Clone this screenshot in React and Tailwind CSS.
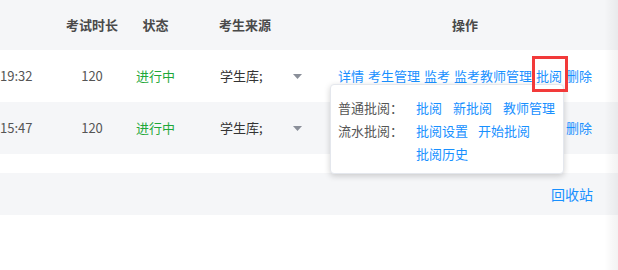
import React from 'react'

const font = { fontFamily: '"Noto Sans CJK SC", "Noto Sans", sans-serif' }

const rows = [
  { time: '19:32', bg: 'bg-white' },
  { time: '15:47', bg: 'bg-[#f5f6f8]' },
]

const ops = ['详情', '考生管理', '监考', '监考教师管理', '批阅', '删除']

function Caret() {
  return (
    <svg width="9" height="5" viewBox="0 0 9 5" className="shrink-0">
      <path d="M0 0h9L4.5 5z" fill="#8a8f99" />
    </svg>
  )
}

function Row({ time, bg, hidden }) {
  return (
    <div className={`grid grid-cols-[62px_60px_67px_121px_1fr] h-[52px] items-center text-[13px] ${bg}`}>
      <div className="text-[#555] whitespace-nowrap overflow-hidden">{time}</div>
      <div className="text-center text-[#555]">120</div>
      <div className="text-center text-[#1fa83a]">进行中</div>
      <div className="flex items-center pl-[31px] pr-[8px] text-[#333]">
        <span className="flex-1">学生库;</span>
        <Caret />
      </div>
      <div className="flex justify-end pr-[26px] gap-[4px] text-[#1890ff] whitespace-nowrap">
        {ops.map((o, i) => (
          <span key={o} className={hidden && i < 5 ? 'invisible' : ''}>{o}</span>
        ))}
      </div>
    </div>
  )
}

export default function App() {
  return (
    <div className="relative w-[618px] h-[270px] bg-white overflow-hidden" style={font}>
      {/* Header */}
      <div className="grid grid-cols-[62px_60px_67px_121px_1fr] h-[50px] items-center bg-[#f5f6f8] text-[13px] font-bold text-[#4a4a4a]">
        <div />
        <div className="text-center">考试时长</div>
        <div className="text-center">状态</div>
        <div className="text-center pr-[9px]">考生来源</div>
        <div className="text-center pl-[2px]">操作</div>
      </div>

      <Row {...rows[0]} />
      <Row {...rows[1]} hidden />

      <div className="h-[19px]" />
      <div className="h-[42px] bg-[#f5f6f8] flex items-center justify-end pr-[25px]">
        <span className="text-[14px] text-[#1890ff]">回收站</span>
      </div>

      {/* right fixed column shadow */}
      <div className="absolute top-0 right-0 w-[14px] h-full bg-gradient-to-r from-transparent to-black/[0.05] pointer-events-none" />

      {/* popover */}
      <div className="absolute left-[330px] top-[84px] w-[234px] h-[90px] bg-white border border-[#e4e7ed] rounded-[4px] shadow-[0_2px_6px_rgba(0,0,0,0.18)] pl-[7px] pt-[11px] text-[13px] leading-[23px]">
        <div className="grid grid-cols-[78px_1fr]">
          <span className="text-[#555]">普通批阅：</span>
          <div className="flex gap-[11px] text-[#1890ff]">
            <span>批阅</span>
            <span>新批阅</span>
            <span>教师管理</span>
          </div>
          <span className="text-[#555]">流水批阅：</span>
          <div className="flex flex-wrap gap-x-[10px] text-[#1890ff] w-[120px]">
            <span>批阅设置</span>
            <span>开始批阅</span>
            <span>批阅历史</span>
          </div>
        </div>
      </div>

      {/* annotation box */}
      <div className="absolute left-[532px] top-[56px] w-[36px] h-[36px] border-[3px] border-[#f23a3a]" />
    </div>
  )
}
